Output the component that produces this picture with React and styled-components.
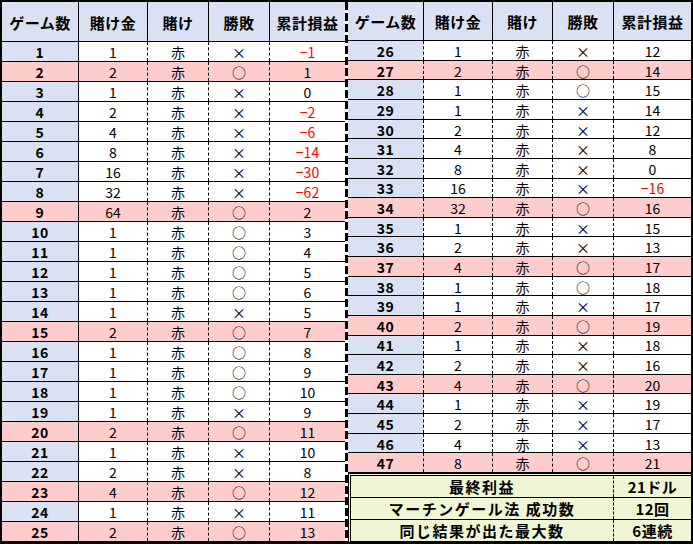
import styled, { createGlobalStyle } from 'styled-components';

const GlobalStyle = createGlobalStyle`
  html, body {
    margin:0;
    padding:0;
    background:#fff;
  }
  body {
    font-family:"Noto Sans CJK JP", "Noto Sans", sans-serif;
    color:#000;
  }
`

const LAVENDER = '#d9e1f2';
const PINK = '#ffcccc';
const SUMMARY = '#eff5d5';

const LEFT_COLS = '77px 69px 61px 61px 75px';
const RIGHT_COLS = '76px 69px 60px 61px 77px';

const leftGames = [
  [1, 1, '×', -1], [2, 2, '○', 1], [3, 1, '×', 0], [4, 2, '×', -2], [5, 4, '×', -6],
  [6, 8, '×', -14], [7, 16, '×', -30], [8, 32, '×', -62], [9, 64, '○', 2], [10, 1, '○', 3],
  [11, 1, '○', 4], [12, 1, '○', 5], [13, 1, '○', 6], [14, 1, '×', 5], [15, 2, '○', 7],
  [16, 1, '○', 8], [17, 1, '○', 9], [18, 1, '○', 10], [19, 1, '×', 9], [20, 2, '○', 11],
  [21, 1, '×', 10], [22, 2, '×', 8], [23, 4, '○', 12], [24, 1, '×', 11], [25, 2, '○', 13],
];

const rightGames = [
  [26, 1, '×', 12], [27, 2, '○', 14], [28, 1, '○', 15], [29, 1, '×', 14], [30, 2, '×', 12],
  [31, 4, '×', 8], [32, 8, '×', 0], [33, 16, '×', -16], [34, 32, '○', 16], [35, 1, '×', 15],
  [36, 2, '×', 13], [37, 4, '○', 17], [38, 1, '○', 18], [39, 1, '×', 17], [40, 2, '○', 19],
  [41, 1, '×', 18], [42, 2, '×', 16], [43, 4, '○', 20], [44, 1, '×', 19], [45, 2, '×', 17],
  [46, 4, '×', 13], [47, 8, '○', 21],
];

const summary = [
  ['最終利益', '21ドル'],
  ['マーチンゲール法 成功数', '12回'],
  ['同じ結果が出た最大数', '6連続'],
];

const headers = ['ゲーム数', '賭け金', '賭け', '勝敗', '累計損益'];

const Sheet = styled.div`
  width:693px;
  height:544px;
  box-sizing:border-box;
  border:2px solid #000;
  display:flex;
  background:#fff;
  overflow:hidden;
`

const Half = styled.div`
  width:343px;
  display:flex;
  flex-direction:column;
`

const Divider = styled.div`
  width:3px;
  background:repeating-linear-gradient(to bottom, #000 0 8px, transparent 8px 11px);
`

const Row = styled.div`
  display:grid;
  grid-template-columns:${(p) => p.$cols};
  height:${(p) => (p.$header ? '40px' : '20px')};
  box-sizing:border-box;
  border-bottom:1px solid #000;
  background:${(p) => (p.$pink ? PINK : '#fff')};
`

const Cell = styled.div`
  display:flex;
  align-items:center;
  justify-content:center;
  box-sizing:border-box;
  border-right:${(p) => (p.$line === 'none' ? 'none' : `1px ${p.$line} #000`)};
  background:${(p) => p.$bg || 'transparent'};
  color:${(p) => (p.$red ? '#ff0000' : '#000')};
  font-size:14px;
  line-height:1;
  padding-top:1px;
  white-space:nowrap;
`

const HeadCell = styled(Cell)`
  background:${LAVENDER};
  font-size:15px;
  font-weight:700;
  letter-spacing:0.5px;
`

const GameCell = styled(Cell)`
  font-size:14px;
  font-weight:700;
  letter-spacing:0.5px;
`

const SummaryBox = styled.div`
  flex:1;
  display:flex;
  flex-direction:column;
  border-top:3px double #000;
  border-left:3px double #000;
  background:${SUMMARY};
`

const SummaryRow = styled.div`
  flex:1;
  display:grid;
  grid-template-columns:1fr 77px;
  border-bottom:1px solid #000;
`

const SummaryLabel = styled.div`
  display:flex;
  align-items:center;
  justify-content:center;
  border-right:1px dashed #000;
  font-size:15px;
  font-weight:700;
  letter-spacing:1.5px;
  white-space:pre;
`

const SummaryValue = styled(SummaryLabel)`
  border-right:none;
  letter-spacing:0.5px;
`

const fmt = (n) => (n < 0 ? `−${Math.abs(n)}` : `${n}`);

const HeaderRow = ({ cols }) => (
  <Row $header $cols={cols}>
    {headers.map((h, i) => (
      <HeadCell key={h} $line={i === headers.length - 1 ? 'none' : 'solid'}>{h}</HeadCell>
    ))}
  </Row>
);

const GameRow = ({ cols, game, firstLine }) => {
  const [no, bet, result, total] = game;
  const pink = result === '○' && bet > 1;
  return (
    <Row $cols={cols} $pink={pink}>
      <GameCell $line={firstLine} $bg={pink ? PINK : LAVENDER}>{no}</GameCell>
      <Cell $line="dashed">{bet}</Cell>
      <Cell $line="dashed">赤</Cell>
      <Cell $line="dashed">{result}</Cell>
      <Cell $line="none" $red={total < 0}>{fmt(total)}</Cell>
    </Row>
  );
};

const App = () => {
  return (
    <>
      <GlobalStyle />
      <Sheet>
        <Half>
          <HeaderRow cols={LEFT_COLS} />
          {leftGames.map((g) => (
            <GameRow key={g[0]} cols={LEFT_COLS} game={g} firstLine="solid" />
          ))}
        </Half>
        <Divider />
        <Half>
          <HeaderRow cols={RIGHT_COLS} />
          {rightGames.map((g) => (
            <GameRow key={g[0]} cols={RIGHT_COLS} game={g} firstLine="dashed" />
          ))}
          <SummaryBox>
            {summary.map(([label, value]) => (
              <SummaryRow key={label}>
                <SummaryLabel>{label}</SummaryLabel>
                <SummaryValue>{value}</SummaryValue>
              </SummaryRow>
            ))}
          </SummaryBox>
        </Half>
      </Sheet>
    </>
  )
}

export default App;
